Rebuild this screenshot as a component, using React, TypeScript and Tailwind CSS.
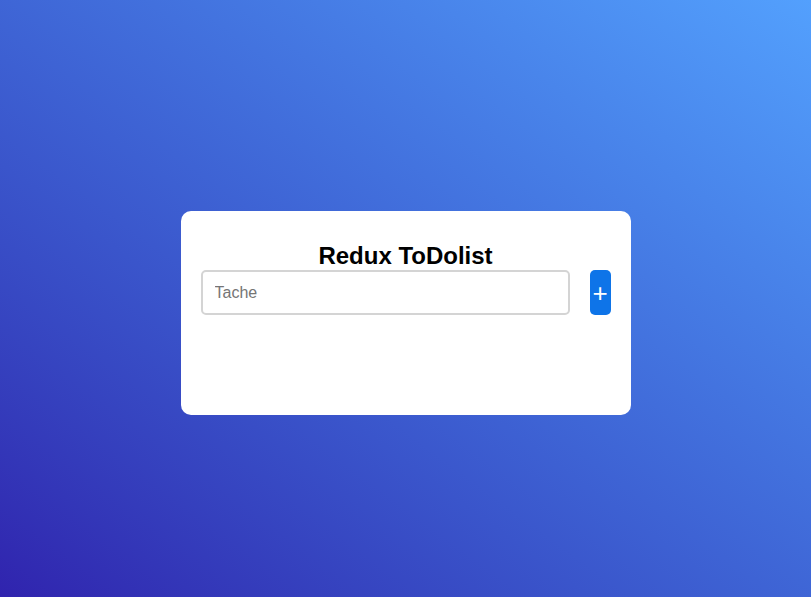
export default function App() {
  return (
    <div
      className="w-full h-[597px] flex items-center justify-center bg-linear-to-tr from-[#3023ae] to-[#53a0fd]"
      style={{ fontFamily: '"Liberation Sans", Arial, sans-serif' }}
    >
      <div className="mt-[29px] w-[450px] h-[204px] bg-white rounded-[10px] pt-[31px] px-[20px] flex flex-col">
        <h1 className="text-[24px] leading-[28px] font-bold text-black text-center">Redux ToDolist</h1>
        <div className="flex gap-[20px]">
          <input
            type="text"
            placeholder="Tache"
            className="w-[369px] h-[45px] border-2 border-[#d4d4d4] rounded-[5px] px-[12px] text-[16px] text-black placeholder:text-[#757575] outline-none"
          />
          <button className="w-[21px] h-[45px] bg-[#0e74e8] rounded-[5px] text-white text-[26px] leading-none flex items-center justify-center">
            +
          </button>
        </div>
      </div>
    </div>
  );
}
